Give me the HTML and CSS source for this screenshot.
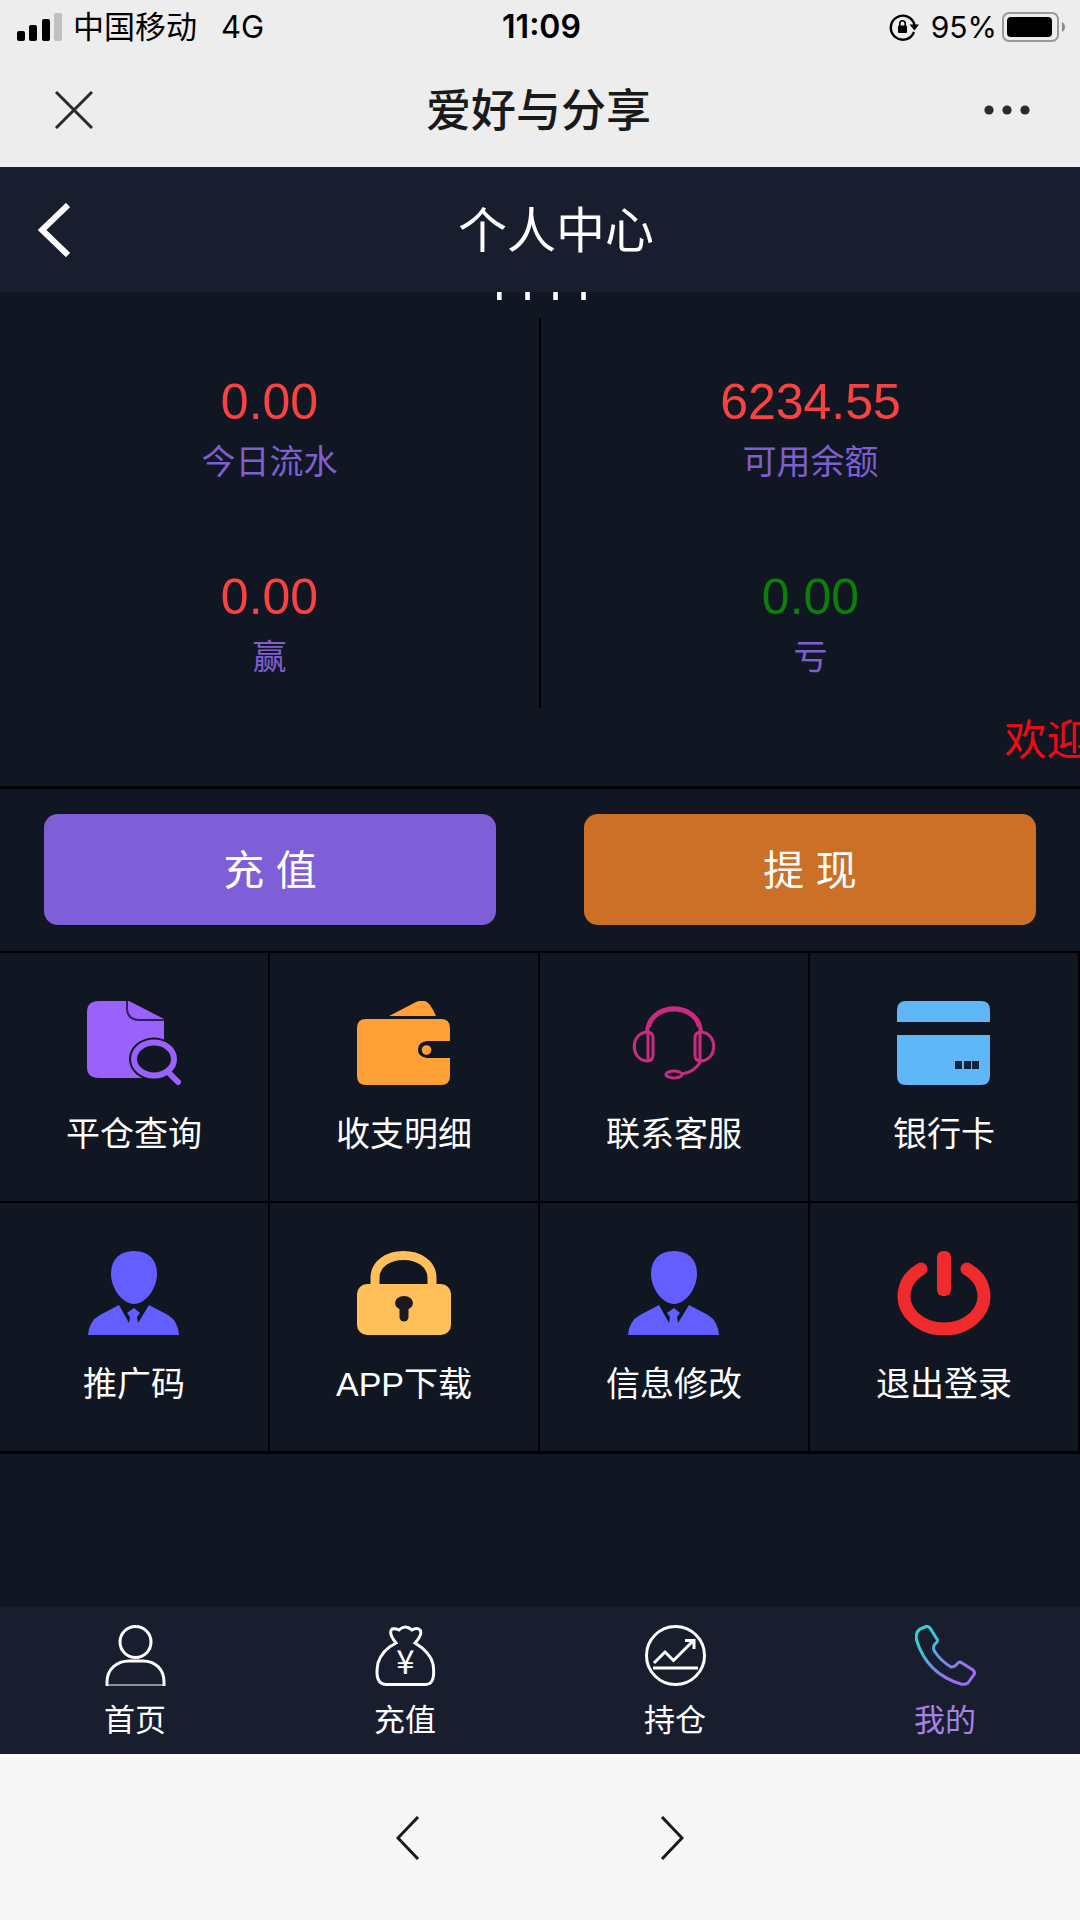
FILE: index.html
```html
<!DOCTYPE html>
<html lang="zh-CN">
<head>
    <meta charset="UTF-8">
    <meta name="viewport" content="width=device-width, initial-scale=1.0">
    <title>个人中心</title>
    <link rel="stylesheet" href="styles.css">
</head>
<body>
    <div class="status-bar">
        <div class="status-left">
            <svg class="signal" width="46" height="28" viewBox="0 0 46 28">
                <rect x="0" y="18" width="8" height="10" rx="2"/>
                <rect x="12" y="12" width="8" height="16" rx="2"/>
                <rect x="25" y="6" width="8" height="22" rx="2"/>
                <rect x="37" y="0" width="8" height="28" rx="2" fill="#c0c0c0"/>
            </svg>
            <span class="carrier">中国移动</span>
            <span>4G</span>
        </div>
        <div class="status-time">11:09</div>
        <div class="status-right">
            <svg width="30" height="28" viewBox="0 0 30 28">
                <path d="M25 19A12 12 0 1 1 25.500 12" fill="none" stroke="#000" stroke-width="2.400"/>
                <path d="M20.500 11.500H30L25.500 17.500Z"/>
                <rect x="9" y="12.500" width="9" height="7.500" rx="1"/>
                <path d="M10.800 13V10.500a2.700 2.700 0 0 1 5.400 0V13" fill="none" stroke="#000" stroke-width="1.600"/>
            </svg>
            <span class="percent">95%</span>
            <svg width="64" height="30" viewBox="0 0 64 30">
                <rect x="1" y="1" width="55" height="28" rx="6" fill="none" stroke="#9a9a9a" stroke-width="2"/>
                <rect x="5" y="5" width="45" height="20" rx="4"/>
                <path d="M60 10C64 12 64 18 60 20Z" fill="#8a8a8a"/>
            </svg>
        </div>
    </div>

    <div class="app-bar">
        <button class="icon-button" type="button" aria-label="关闭">
            <svg width="38" height="38" viewBox="0 0 38 38">
                <path d="M1 1L37 37M37 1L1 37" stroke="#2b2b2b" stroke-width="3"/>
            </svg>
        </button>
        <div class="app-title">爱好与分享</div>
        <button class="icon-button" type="button" aria-label="更多">
            <svg width="46" height="10" viewBox="0 0 46 10" fill="#2b2b2b">
                <circle cx="5" cy="5" r="4.600"/>
                <circle cx="23" cy="5" r="4.600"/>
                <circle cx="41" cy="5" r="4.600"/>
            </svg>
        </button>
    </div>

    <header class="page-header">
        <a href="#" class="back" aria-label="返回">
            <svg width="32" height="54" viewBox="0 0 32 54">
                <path d="M30 2L4 27L30 52" fill="none" stroke="#fff" stroke-width="6"/>
            </svg>
        </a>
        <h1>个人中心</h1>
    </header>

    <main class="content">
        <div class="username"><span>1111</span></div>

        <section class="stats">
            <div class="stats-column">
                <div class="stat">
                    <div class="stat-value">0.00</div>
                    <div class="stat-label">今日流水</div>
                </div>
                <div class="stat">
                    <div class="stat-value">0.00</div>
                    <div class="stat-label">赢</div>
                </div>
            </div>
            <div class="stats-column">
                <div class="stat">
                    <div class="stat-value">6234.55</div>
                    <div class="stat-label">可用余额</div>
                </div>
                <div class="stat">
                    <div class="stat-value loss">0.00</div>
                    <div class="stat-label">亏</div>
                </div>
            </div>
        </section>

        <div class="notice">欢迎</div>

        <div class="actions">
            <button class="button recharge" type="button">充 值</button>
            <button class="button withdraw" type="button">提 现</button>
        </div>

        <div class="menu">
            <a href="#" class="menu-item">
                <svg class="menu-icon" viewBox="0 0 94 84">
                    <path d="M12 0H42L77 18V77H12Q0 77 0 66V11Q0 0 12 0Z" fill="#9a62fa"/>
                    <path d="M40 0V7Q40 19 53 19H77" fill="none" stroke="#2c2160" stroke-width="2"/>
                    <ellipse cx="67" cy="58" rx="25" ry="21.500" fill="#111722"/>
                    <ellipse cx="67" cy="58" rx="20" ry="16.500" fill="#111722" stroke="#9a62fa" stroke-width="6"/>
                    <path d="M81 71L91 81" stroke="#9a62fa" stroke-width="6" stroke-linecap="round"/>
                </svg>
                <span>平仓查询</span>
            </a>
            <a href="#" class="menu-item">
                <svg class="menu-icon" viewBox="0 0 94 84">
                    <path d="M32 15L59 1Q68 -3 73 4Q76 8 79 15Z" fill="#ffa036"/>
                    <path d="M9 18H84Q93 18 93 27V40H70Q61 41 61 48.500Q61 56 70 57H93V75Q93 84 84 84H9Q0 84 0 75V27Q0 18 9 18Z" fill="#ffa036"/>
                    <circle cx="69.500" cy="49" r="4.800" fill="#ffa036"/>
                </svg>
                <span>收支明细</span>
            </a>
            <a href="#" class="menu-item">
                <svg class="menu-icon" viewBox="0 0 94 84" fill="none" stroke="#cb2a81" stroke-width="3">
                    <path d="M20 32C21 -1 73 -1 74 32" stroke-width="4"/>
                    <path d="M23 26C28 4 66 4 71 26" stroke-width="2"/>
                    <path d="M20 31C3 32 3 59 20 60Q26 60 26 54V37Q26 31 20 31ZM21 32V59"/>
                    <path d="M74 31C91 32 91 59 74 60Q68 60 68 54V37Q68 31 74 31ZM73 32V59"/>
                    <path d="M74 60Q67 72 54 73"/>
                    <ellipse cx="47" cy="73.500" rx="8" ry="3.500"/>
                </svg>
                <span>联系客服</span>
            </a>
            <a href="#" class="menu-item">
                <svg class="menu-icon" viewBox="0 0 94 84">
                    <path d="M0 21V9Q0 0 9 0H84Q93 0 93 9V21ZM0 34H93V75Q93 84 84 84H9Q0 84 0 75Z" fill="#60b7f7"/>
                    <path d="M58 60h7v8h-7zM67 60h7v8h-7zM75 60h7v8h-7z" fill="#10253c"/>
                </svg>
                <span>银行卡</span>
            </a>
            <a href="#" class="menu-item">
                <svg class="menu-icon" viewBox="0 0 94 84" fill="#645dff">
                    <path d="M47 0C62 0 70 9 70 23C70 38 58 53 47 53C36 53 24 38 24 23C24 9 32 0 47 0Z"/>
                    <path d="M1 84Q2 70 13 64L32 54L42 72L43 66L40 62L47 57L53 62L50 66L51 72L62 54L81 64Q91 70 92 84Z"/>
                </svg>
                <span>推广码</span>
            </a>
            <a href="#" class="menu-item">
                <svg class="menu-icon" viewBox="0 0 94 84">
                    <path d="M18 36V27C18 -3 75 -3 75 27V36" fill="none" stroke="#ffc05a" stroke-width="9"/>
                    <rect x="0" y="33" width="94" height="51" rx="10" fill="#ffc05a"/>
                    <ellipse cx="47" cy="52" rx="9" ry="7" fill="#1c1a1c"/>
                    <path d="M47 53V66" stroke="#1c1a1c" stroke-width="9" stroke-linecap="round"/>
                </svg>
                <span>APP下载</span>
            </a>
            <a href="#" class="menu-item">
                <svg class="menu-icon" viewBox="0 0 94 84" fill="#645dff">
                    <path d="M47 0C62 0 70 9 70 23C70 38 58 53 47 53C36 53 24 38 24 23C24 9 32 0 47 0Z"/>
                    <path d="M1 84Q2 70 13 64L32 54L42 72L43 66L40 62L47 57L53 62L50 66L51 72L62 54L81 64Q91 70 92 84Z"/>
                </svg>
                <span>信息修改</span>
            </a>
            <a href="#" class="menu-item">
                <svg class="menu-icon" viewBox="0 0 94 84" fill="none" stroke="#ef2b2d" stroke-width="13">
                    <path d="M24 18A40 33 0 1 0 70 18" stroke-linecap="round"/>
                    <rect x="40" y="0" width="14" height="45" rx="6" fill="#ef2b2d" stroke="none"/>
                </svg>
                <span>退出登录</span>
            </a>
        </div>
    </main>

    <nav class="tab-bar">
        <a href="#" class="tab">
            <svg class="tab-icon" viewBox="0 0 61 61">
                <circle cx="30.500" cy="17" r="15.500"/>
                <path d="M2 61V57C2 44 12 36 24 36H38C50 36 59 44 59 57V61"/>
                <path d="M2 60H59" stroke-width="1"/>
            </svg>
            <span>首页</span>
        </a>
        <a href="#" class="tab">
            <svg class="tab-icon" viewBox="0 0 61 61">
                <path d="M21 18Q13 8 17 4Q20 3 24 5Q30 -1 37 5Q42 2 45 5Q48 9 40 18Q55 27 58 39Q61 59 51 59.500H11Q-1 59 3 38Q7 25 21 18Z"/>
                <text class="yen" x="30.500" y="49" text-anchor="middle">¥</text>
            </svg>
            <span>充值</span>
        </a>
        <a href="#" class="tab">
            <svg class="tab-icon" viewBox="0 0 61 61">
                <circle cx="30.500" cy="30.500" r="29"/>
                <path d="M9 38L20 27L28.500 35.500L48 16M40 15.500H49V24M8 43H53"/>
            </svg>
            <span>持仓</span>
        </a>
        <a href="#" class="tab active">
            <svg class="tab-icon" viewBox="0 0 61 61">
                <defs>
                    <linearGradient id="phone" x1="0" y1="0" x2="1" y2="1">
                        <stop offset="0.150" stop-color="#2fd6cf"/>
                        <stop offset="0.500" stop-color="#6a92e6"/>
                        <stop offset="0.800" stop-color="#a06cf0"/>
                    </linearGradient>
                </defs>
                <path d="M11 1.500Q13 1 15 3L22.500 15Q23 17 20 19Q17 23 20 27Q26 36 36 42Q40 42 42 39Q44 36 47 38L58 45Q61 48 58 51L53 58Q50 60 46 59Q12 49 1.500 15Q0 8 5 4Z" stroke="url(#phone)"/>
            </svg>
            <span>我的</span>
        </a>
    </nav>

    <div class="browser-bar">
        <button class="icon-button" type="button" aria-label="后退">
            <svg width="24" height="44" viewBox="0 0 24 44">
                <path d="M22 1L2 22L22 43" fill="none" stroke="#1a1a1a" stroke-width="3"/>
            </svg>
        </button>
        <button class="icon-button" type="button" aria-label="前进">
            <svg width="24" height="44" viewBox="0 0 24 44">
                <path d="M2 1L22 22L2 43" fill="none" stroke="#1a1a1a" stroke-width="3"/>
            </svg>
        </button>
    </div>
</body>
</html>
```

FILE: styles.css
```css
* {
    margin: 0;
    padding: 0;
    box-sizing: border-box;
}
body {
    display: flex;
    flex-direction: column;
    min-height: 100vh;
    font-family: "Liberation Sans", "Noto Sans CJK SC", sans-serif;
    font-size: 34px;
    background-color: #111722;
    color: #ffffff;
}
svg {
    display: block;
}
a {
    color: inherit;
    text-decoration: none;
}
.icon-button {
    border: none;
    background: none;
    cursor: pointer;
}

/* Phone status bar */
.status-bar {
    display: grid;
    grid-template-columns: 1fr auto 1fr;
    align-items: center;
    height: 54px;
    padding: 0 14px 0 17px;
    background-color: #ededed;
    color: #000000;
    font-family: Inter, "Noto Sans CJK SC", sans-serif;
    font-size: 31px;
    line-height: 54px;
}
.status-left, .status-right {
    display: flex;
    align-items: center;
}
.status-right {
    justify-content: flex-end;
}
.carrier {
    margin: 0 24px 0 10px;
}
.status-time {
    font-size: 32px;
    font-weight: 600;
}
.percent {
    margin: 0 5px 0 12px;
    font-size: 30px;
}

/* Title bar of the host app */
.app-bar {
    display: flex;
    justify-content: space-between;
    align-items: center;
    height: 113px;
    padding: 0 50px 2px 55px;
    background-color: #ededed;
    box-shadow: inset 0 -4px 0 #eef0f3;
}
.app-title {
    padding-bottom: 4px;
    color: #1a1a1a;
    font-size: 45px;
    font-weight: 500;
}

.page-header {
    display: flex;
    align-items: center;
    height: 125px;
    padding: 0 38px;
    background-color: #191e2f;
}
.page-header h1 {
    flex: 1;
    padding-bottom: 6px;
    font-size: 49px;
    font-weight: normal;
    text-align: center;
}

.content {
    flex: 1;
}
.username {
    display: flex;
    justify-content: center;
    align-items: flex-end;
    height: 26px;
    padding-bottom: 17px;
    overflow: hidden;
    font-family: Roboto, sans-serif;
    font-size: 50px;
    line-height: 36px;
}

.stats {
    display: flex;
}
.stats-column {
    flex: 1;
    text-align: center;
}
.stats-column:first-child {
    border-right: 2px solid #000000;
}
.stat {
    height: 195px;
    padding-top: 54px;
}
.stat-value {
    color: #fa4242;
    font-size: 50px;
    line-height: 60px;
}
.stat-value.loss {
    color: #0a800a;
}
.stat-label {
    color: #7f5fd0;
    line-height: 60px;
}

.notice {
    height: 78px;
    padding-left: 93%;
    overflow: hidden;
    white-space: nowrap;
    color: #f00a14;
    font-size: 42px;
    line-height: 66px;
}

.actions {
    display: flex;
    gap: 88px;
    padding: 25px 44px 26px;
    border-top: 3px solid #000000;
}
.button {
    flex: 1;
    height: 111px;
    padding-bottom: 5px;
    border: none;
    border-radius: 14px;
    color: #ffffff;
    font-family: inherit;
    font-size: 41px;
    cursor: pointer;
}
.recharge {
    background-color: #7f5fd8;
}
.withdraw {
    background-color: #cc7027;
}

.menu {
    display: grid;
    grid-template-columns: repeat(4, 1fr);
    border-top: 2px solid #000000;
    border-bottom: 1px solid #000000;
}
.menu-item {
    display: flex;
    flex-direction: column;
    align-items: center;
    height: 250px;
    padding-top: 48px;
    border-right: 2px solid #000000;
    border-bottom: 2px solid #000000;
    line-height: 50px;
}
.menu-icon {
    width: 94px;
    height: 84px;
    margin-bottom: 24px;
}

.tab-bar {
    display: flex;
    height: 147px;
    padding-top: 18px;
    background-color: #191e2f;
    font-size: 31px;
    line-height: 46px;
}
.tab {
    flex: 1;
    display: flex;
    flex-direction: column;
    align-items: center;
}
.tab.active {
    color: #a483e8;
}
.tab-icon {
    width: 61px;
    height: 61px;
    margin-bottom: 12px;
    fill: none;
    stroke: #ffffff;
    stroke-width: 3px;
}
.yen {
    fill: #ffffff;
    stroke: none;
    font-family: "Noto Sans CJK SC", sans-serif;
    font-size: 33px;
}

.browser-bar {
    display: flex;
    justify-content: center;
    align-items: center;
    gap: 240px;
    height: 166px;
    background-color: #f7f7f7;
    border-top: 2px solid #ffffff;
}
```
